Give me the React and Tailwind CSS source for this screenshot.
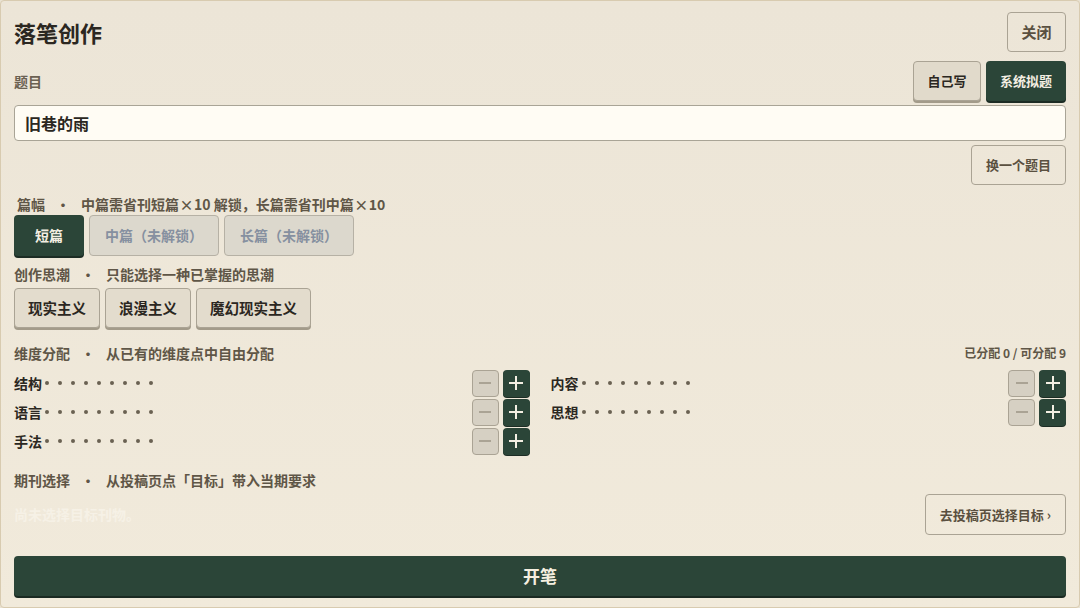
import { useState } from 'react';

const FONT = { fontFamily: '"Noto Sans CJK SC", "Noto Sans", sans-serif' };

const LENGTHS = [
  { key: 'short', label: '短篇', locked: false },
  { key: 'mid', label: '中篇（未解锁）', locked: true },
  { key: 'long', label: '长篇（未解锁）', locked: true },
];

const SCHOOLS = [
  { name: '现实主义', w: 'w-[86px]' },
  { name: '浪漫主义', w: 'w-[86px]' },
  { name: '魔幻现实主义', w: 'w-[115px]' },
];

const DIMS = [
  ['结构', '内容'],
  ['语言', '思想'],
  ['手法', null],
];

function SectionLabel({ title, children }) {
  return (
    <div className="flex items-center text-[14px] font-bold leading-none text-[#5f5647]">
      <span>{title}</span>
      <span className="mx-[11px]">·</span>
      <span className="flex items-center">{children}</span>
    </div>
  );
}

// wide multiplication sign, the font's own glyph is too narrow
const Times = () => <span className="inline-block w-[15px] text-center">×</span>;

function DimRow({ name, value }) {
  return (
    <div className="flex h-[26px] items-center justify-between">
      <div className="flex items-center">
        <span className="text-[14px] font-bold text-[#2b2721]">{name}</span>
        <div className="ml-[3px] flex items-center gap-[9px]">
          {Array.from({ length: 9 }).map((_, i) => (
            <span
              key={i}
              className={i < value ? 'h-[4px] w-[4px] rounded-full bg-[#2d4739]' : 'h-[4px] w-[4px] rounded-full bg-[#6a6152]'}
            />
          ))}
        </div>
      </div>
      <div className="flex gap-[4px]">
        <button className="flex h-[27px] w-[27px] items-center justify-center rounded-[4px] border border-[#aaa394] bg-[#d6d0c3]">
          <span className="h-[2px] w-[12px] bg-[#aaa394]" />
        </button>
        <button className="relative flex h-[27px] w-[27px] items-center justify-center rounded-[4px] bg-[#2b4538] shadow-[0_1px_0_#1c2c24]">
          <span className="absolute h-[2px] w-[14px] bg-[#f3eee2]" />
          <span className="absolute h-[14px] w-[2px] bg-[#f3eee2]" />
        </button>
      </div>
    </div>
  );
}

export default function App() {
  const [titleMode, setTitleMode] = useState('system');
  const [title, setTitle] = useState('旧巷的雨');
  const [length, setLength] = useState('short');
  const [school, setSchool] = useState(null);

  return (
    <div style={FONT} className="h-[608px] w-[1080px] overflow-hidden bg-[#e9e2d3]">
      <div className="flex h-full flex-col rounded-[4px] border border-[#d8cbb0] bg-gradient-to-b from-[#ece5d7] to-[#f1eadb] px-[13px] pt-[11px]">
        {/* header */}
        <div className="flex items-center justify-between">
          <h1 className="text-[22px] font-bold leading-none text-[#2b2721]">落笔创作</h1>
          <button className="h-[40px] w-[59px] rounded-[4px] border border-[#aaa394] text-[15px] font-bold text-[#5a5040]">
            关闭
          </button>
        </div>

        {/* title */}
        <div className="mt-[9px] flex items-center justify-between">
          <span className="text-[14px] font-bold text-[#6b6152]">题目</span>
          <div className="flex gap-[5px]">
            <button
              onClick={() => setTitleMode('self')}
              className={
                titleMode === 'self'
                  ? 'h-[40px] w-[68px] rounded-[4px] bg-[#2b4538] text-[13px] font-bold text-[#f3eee2] shadow-[0_2px_0_#1c2c24]'
                  : 'h-[40px] w-[68px] rounded-[4px] border border-[#aaa394] bg-[#e1dacb] text-[13px] font-bold text-[#2b2721] shadow-[0_2px_0_#a39b8a]'
              }
            >
              自己写
            </button>
            <button
              onClick={() => setTitleMode('system')}
              className={
                titleMode === 'system'
                  ? 'h-[40px] w-[80px] rounded-[4px] bg-[#2b4538] text-[13px] font-bold text-[#f3eee2] shadow-[0_2px_0_#1c2c24]'
                  : 'h-[40px] w-[80px] rounded-[4px] border border-[#aaa394] bg-[#e1dacb] text-[13px] font-bold text-[#2b2721] shadow-[0_2px_0_#a39b8a]'
              }
            >
              系统拟题
            </button>
          </div>
        </div>
        <input
          value={title}
          onChange={(e) => setTitle(e.target.value)}
          className="mt-[4px] h-[36px] w-full rounded-[4px] border border-[#a9a496] bg-[#fffcf4] px-[10px] text-[16px] font-bold text-[#2b2721] outline-none"
        />
        <div className="mt-[4px] flex justify-end">
          <button className="h-[40px] w-[95px] rounded-[4px] border border-[#aaa394] text-[13px] font-bold text-[#5a5040]">
            换一个题目
          </button>
        </div>

        {/* length */}
        <div className="mt-[12px] pl-[3px]">
          <SectionLabel title="篇幅">
            中篇需省刊短篇<Times />10 解锁，长篇需省刊中篇<Times />10
          </SectionLabel>
        </div>
        <div className="mt-[4px] flex gap-[5px]">
          {LENGTHS.map((l) => {
            const active = length === l.key;
            let cls = 'h-[41px] rounded-[4px] text-[14px] font-bold ';
            if (active) cls += 'w-[70px] bg-[#2b4538] text-[#f3eee2] shadow-[0_2px_0_#1c2c24]';
            else if (l.locked) cls += 'w-[130px] border border-[#b6b1a5] bg-[#dcd8cd] text-[#8690a0]';
            return (
              <button key={l.key} disabled={l.locked} onClick={() => setLength(l.key)} className={cls}>
                {l.label}
              </button>
            );
          })}
        </div>

        {/* school */}
        <div className="mt-[11px]">
          <SectionLabel title="创作思潮">只能选择一种已掌握的思潮</SectionLabel>
        </div>
        <div className="mt-[7px] flex gap-[5px]">
          {SCHOOLS.map((s) => (
            <button
              key={s.name}
              onClick={() => setSchool(s.name)}
              className={
                school === s.name
                  ? `h-[40px] ${s.w} rounded-[4px] bg-[#2b4538] text-[14.5px] font-bold text-[#f3eee2] shadow-[0_2px_0_#1c2c24]`
                  : `h-[40px] ${s.w} rounded-[4px] border border-[#aaa394] bg-[#e3dccd] text-[14.5px] font-bold text-[#2b2721] shadow-[0_2px_0_#a39b8a]`
              }
            >
              {s.name}
            </button>
          ))}
        </div>

        {/* dimensions */}
        <div className="mt-[16px] flex items-center justify-between">
          <SectionLabel title="维度分配">从已有的维度点中自由分配</SectionLabel>
          <span className="text-[12px] font-bold text-[#5f5647]">已分配 0 / 可分配 9</span>
        </div>
        <div className="mt-[8px] flex flex-col gap-[3px]">
          {DIMS.map(([a, b]) => (
            <div key={a} className="grid grid-cols-2 gap-[21px]">
              <DimRow name={a} value={0} />
              {b ? <DimRow name={b} value={0} /> : <div />}
            </div>
          ))}
        </div>

        {/* journal */}
        <div className="mt-[19px]">
          <SectionLabel title="期刊选择">从投稿页点「目标」带入当期要求</SectionLabel>
        </div>
        <div className="mt-[7px] flex items-center justify-between">
          <span className="text-[14px] font-bold text-[#f6f1e6]">尚未选择目标刊物。</span>
          <button className="h-[41px] rounded-[4px] border border-[#aaa394] px-[14px] text-[13px] font-bold text-[#5a5040]">
            去投稿页选择目标 ›
          </button>
        </div>

        <button className="mt-[21px] h-[40px] w-full rounded-[4px] bg-[#2b4538] text-[17px] font-bold text-[#f5efe0] shadow-[0_2px_0_#1a2a22]">
          开笔
        </button>
      </div>
    </div>
  );
}
